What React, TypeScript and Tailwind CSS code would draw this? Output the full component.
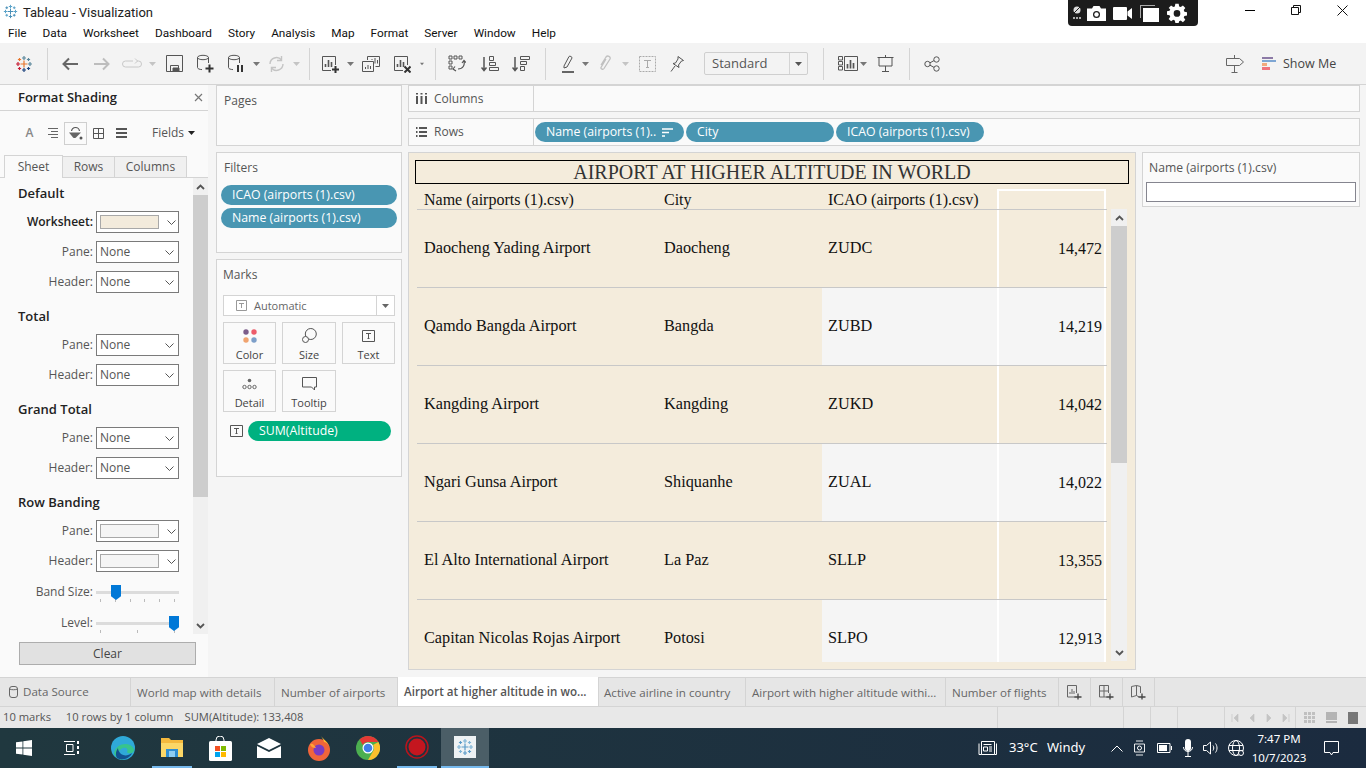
import React from 'react';

const rows = [
  { name: 'Daocheng Yading Airport', city: 'Daocheng', icao: 'ZUDC', alt: '14,472' },
  { name: 'Qamdo Bangda Airport', city: 'Bangda', icao: 'ZUBD', alt: '14,219' },
  { name: 'Kangding Airport', city: 'Kangding', icao: 'ZUKD', alt: '14,042' },
  { name: 'Ngari Gunsa Airport', city: 'Shiquanhe', icao: 'ZUAL', alt: '14,022' },
  { name: 'El Alto International Airport', city: 'La Paz', icao: 'SLLP', alt: '13,355' },
  { name: 'Capitan Nicolas Rojas Airport', city: 'Potosi', icao: 'SLPO', alt: '12,913' },
];

function Caret({ color = '#777' }: { color?: string }) {
  return (
    <svg width="7" height="4" viewBox="0 0 7 4">
      <path d="M0 0h7L3.5 4z" fill={color} />
    </svg>
  );
}

function Chevron() {
  return (
    <svg width="9" height="5" viewBox="0 0 9 5" fill="none" stroke="#555" strokeWidth="1">
      <path d="M.5.5l4 4 4-4" />
    </svg>
  );
}

function TableauMark({ c1, c2, c3, c4, size = 18 }: { c1: string; c2: string; c3: string; c4: string; size?: number }) {
  const plus = (x: number, y: number, r: number, c: string, k: string) => (
    <path key={k} d={`M${x - r} ${y}h${r * 2}M${x} ${y - r}v${r * 2}`} stroke={c} strokeWidth="1.2" fill="none" />
  );
  return (
    <svg width={size} height={size} viewBox="0 0 18 18">
      {plus(9, 9, 3.5, c1, 'a')}
      {plus(9, 3, 2, c2, 'b')}
      {plus(3, 9, 2, c3, 'c')}
      {plus(15, 9, 2, c2, 'd')}
      {plus(9, 15, 2, c4, 'e')}
      {plus(4.5, 4.5, 1.6, c1, 'f')}
      {plus(13.5, 4.5, 1.6, c2, 'g')}
      {plus(4.5, 13.5, 1.6, c3, 'h')}
      {plus(13.5, 13.5, 1.6, c4, 'i')}
    </svg>
  );
}

function SheetIcon({ plus, cross, color = '#555' }: { plus?: boolean; cross?: boolean; color?: string }) {
  return (
    <svg width="18" height="18" viewBox="0 0 18 18" fill="none" stroke={color}>
      <path d="M10 15.5H1.5v-14h13V10" />
      <path d="M4.5 12V9M7.5 12V5M10.5 12V7" strokeWidth="1.6" />
      {plus && <path d="M11 14.5h7M14.5 11v7" strokeWidth="2" stroke="#333" />}
      {cross && <path d="M11.5 11.5l6 6M17.5 11.5l-6 6" strokeWidth="2" stroke="#333" />}
    </svg>
  );
}

function DbIcon({ badge }: { badge: 'plus' | 'pause' }) {
  return (
    <svg width="18" height="19" viewBox="0 0 18 19" fill="none" stroke="#555">
      <ellipse cx="7" cy="3.5" rx="5.5" ry="2.2" />
      <path d="M1.5 3.5v10c0 1.2 2 2 4.5 2.1M12.5 3.5V9" />
      {badge === 'plus' ? (
        <path d="M9.5 14.5h8M13.5 10.5v8" strokeWidth="2" stroke="#333" />
      ) : (
        <path d="M11 11v7M15 11v7" strokeWidth="2" stroke="#333" />
      )}
    </svg>
  );
}

function Sep() {
  return <div className="w-px h-[32px] bg-[#d4d4d4]" />;
}

function Slot({ className, children }: { className: string; children?: React.ReactNode }) {
  return <div className={`flex items-center justify-center shrink-0 ${className}`}>{children}</div>;
}

function TitleBar() {
  return (
    <div className="flex h-[25px] bg-white items-start">
      <div className="w-[23px] pl-[3px] pt-[4px]">
        <TableauMark c1="#4a90b8" c2="#5ba3c9" c3="#5ba3c9" c4="#4a90b8" size={15} />
      </div>
      <span className="w-[120px] whitespace-nowrap text-[13px] leading-[25px] text-[#222] font-['Roboto',sans-serif]">Tableau - Visualization</span>
      <div className="ml-[925px] w-[130px] h-[26px] bg-[#1c1c1c] rounded-b-[4px] flex items-center relative z-10">
        <Slot className="w-[17px]">
          <svg width="10" height="14" viewBox="0 0 10 14">
            <circle cx="5" cy="4" r="3.5" fill="#ddd" />
            <path d="M1 8l7-7" stroke="#1c1c1c" strokeWidth="1" />
            <path d="M1 12h2M4 12h2M7 12h2" stroke="#ddd" strokeWidth="1.5" />
          </svg>
        </Slot>
        <Slot className="w-[22px]">
          <svg width="19" height="15" viewBox="0 0 19 15">
            <path d="M0 2.5h5L6.5 0h6L14 2.5h5V15H0z" fill="#fff" />
            <circle cx="9.5" cy="8.5" r="3.5" fill="#1c1c1c" />
            <circle cx="9.5" cy="8.5" r="2.2" fill="#fff" />
          </svg>
        </Slot>
        <Slot className="w-[20px] ml-[5px]">
          <svg width="19" height="13" viewBox="0 0 19 13">
            <rect width="14" height="13" rx="1" fill="#fff" />
            <path d="M14.5 4.5L19 1v11l-4.500-3.500z" fill="#fff" />
          </svg>
        </Slot>
        <Slot className="w-[20px] ml-[7px]">
          <svg width="19" height="17" viewBox="0 0 19 17">
            <path d="M0 0h15v1H1v12H0z" fill="#aaa" />
            <rect x="3" y="3" width="16" height="14" fill="#fff" />
          </svg>
        </Slot>
        <Slot className="w-[20px] ml-[8px]">
          <svg width="20" height="20" viewBox="0 0 24 24">
            <path
              fill="#fff"
              fillRule="evenodd"
              d="M10 1h4l.6 3.100 1.900.8L19.100 3 22 5.900l-1.900 2.600.8 1.900L24 11v4l-3.100.6-.8 1.900 1.900 2.600-2.900 2.900-2.600-1.900-1.900.8L14 24h-4l-.6-3.100-1.900-.8L4.900 22 2 19.100l1.900-2.600-.8-1.900L0 14v-4l3.100-.6.8-1.900L2 5.900 4.900 3l2.600 1.900 1.900-.8zM12 8.500a4 4 0 100 8 4 4 0 000-8z"
            />
          </svg>
        </Slot>
      </div>
      <div className="flex flex-1 items-start">
        <Slot className="w-[46px] h-[20px] ml-[29px]">
          <div className="w-[10px] h-px bg-black" />
        </Slot>
        <Slot className="w-[46px] h-[20px]">
          <svg width="10" height="10" viewBox="0 0 10 10" fill="none" stroke="#111">
            <path d="M2.500 2.500V.5h7v7h-2M.5 2.500h7v7h-7z" />
          </svg>
        </Slot>
        <Slot className="w-[46px] h-[20px]">
          <svg width="11" height="11" viewBox="0 0 11 11" fill="none" stroke="#111">
            <path d="M.5.5l10 10M10.500.5l-10 10" />
          </svg>
        </Slot>
      </div>
    </div>
  );
}

function MenuBar() {
  const items = ['File', 'Data', 'Worksheet', 'Dashboard', 'Story', 'Analysis', 'Map', 'Format', 'Server', 'Window', 'Help'];
  return (
    <div className="flex h-[18px] bg-white items-center pl-[8px] gap-[16px] text-[11.8px] text-[#111] font-['Roboto',sans-serif]">
      {items.map((m) => (
        <span key={m}>{m}</span>
      ))}
    </div>
  );
}

function Toolbar() {
  return (
    <div className="flex h-[42px] items-center bg-[#f3f3f3] border-b border-[#d4d4d4] pl-[8px]">
      <Slot className="w-[32px]">
        <TableauMark c1="#e8762d" c2="#5b879b" c3="#c72037" c4="#1f447e" />
      </Slot>
      <Slot className="w-[14px]"><Sep /></Slot>
      <Slot className="w-[32px]">
        <svg width="18" height="14" viewBox="0 0 18 14" fill="none" stroke="#666" strokeWidth="2">
          <path d="M17 7H3M8 1.500L2.500 7 8 12.500" />
        </svg>
      </Slot>
      <Slot className="w-[32px]">
        <svg width="18" height="14" viewBox="0 0 18 14" fill="none" stroke="#bdbdbd" strokeWidth="2">
          <path d="M1 7h14M10 1.500L15.500 7 10 12.500" />
        </svg>
      </Slot>
      <Slot className="w-[28px]">
        <svg width="20" height="12" viewBox="0 0 20 12" fill="none" stroke="#c8c8c8">
          <path d="M11 3H3.500a3 3 0 000 6h13a3 3 0 000-6H15M13 .5L15.500 3 13 5.500" />
        </svg>
      </Slot>
      <Slot className="w-[12px]"><Caret color="#c4c4c4" /></Slot>
      <Slot className="w-[32px]">
        <svg width="17" height="17" viewBox="0 0 17 17" fill="none" stroke="#555">
          <path d="M.5.5h16v16H.5z" />
          <path d="M4.500 16.500v-6h8v6" />
          <path d="M7 13h6v3.500H7z" fill="#555" />
        </svg>
      </Slot>
      <Slot className="w-[30px]"><DbIcon badge="plus" /></Slot>
      <Slot className="w-[32px]"><DbIcon badge="pause" /></Slot>
      <Slot className="w-[8px]"><Caret /></Slot>
      <Slot className="w-[32px]">
        <svg width="17" height="16" viewBox="0 0 17 16" fill="none" stroke="#c4c4c4" strokeWidth="1.400">
          <path d="M2 8a6.500 6.500 0 0111.500-4M15 8a6.500 6.500 0 01-11.500 4" />
          <path d="M13.500 0v4.500H9M3.500 16v-4.500H8" />
        </svg>
      </Slot>
      <Slot className="w-[8px]"><Caret color="#c4c4c4" /></Slot>
      <Slot className="w-[18px]"><Sep /></Slot>
      <Slot className="w-[24px]"><SheetIcon plus /></Slot>
      <Slot className="w-[16px]"><Caret /></Slot>
      <Slot className="w-[26px]">
        <svg width="18" height="16" viewBox="0 0 18 16" fill="none" stroke="#555">
          <path d="M5.500 4V.5h12v10h-4" />
          <path d="M.5 5.500h11v10H.5z" fill="#f3f3f3" />
          <path d="M3.500 13v-2M6 13v-4M8.500 13v-3M10 4V3M13 7.500V2M15.500 7.500V4" />
        </svg>
      </Slot>
      <Slot className="w-[36px]"><SheetIcon cross /></Slot>
      <Slot className="w-[4px]"><Caret /></Slot>
      <Slot className="w-[22px]"><Sep /></Slot>
      <Slot className="w-[22px]">
        <svg width="18" height="17" viewBox="0 0 18 17" fill="none" stroke="#555">
          <path d="M1 1h3v3H1zM6 1h3v3H6zM11 1h3v3h-3zM1 6h3v3H1zM1 11h3v3H1z" />
          <path d="M16 6c1 4-1 8-6 8M7 11.500l-2 2.500 3 2M14 8l2-2.500 2 2" strokeWidth="1.200" />
        </svg>
      </Slot>
      <Slot className="w-[44px]">
        <svg width="18" height="16" viewBox="0 0 18 16" fill="none" stroke="#555">
          <path d="M3 1v13M.5 11.500L3 14.500l2.500-3" strokeWidth="1.500" />
          <path d="M8.500.5h4v4h-4zM8.500 6.500h6v3h-6zM8.500 11.500h9v3h-9z" />
        </svg>
      </Slot>
      <Slot className="w-[18px]">
        <svg width="18" height="16" viewBox="0 0 18 16" fill="none" stroke="#555">
          <path d="M3 1v13M.5 11.500L3 14.500l2.500-3" strokeWidth="1.500" />
          <path d="M8.500.5h9v3h-9zM8.500 5.500h6v3h-6zM8.500 10.500h4v4h-4z" />
        </svg>
      </Slot>
      <Slot className="w-[30px]"><Sep /></Slot>
      <Slot className="w-[16px]">
        <svg width="14" height="18" viewBox="0 0 14 18" fill="none" stroke="#555">
          <path d="M3 11L8 1.500c.7-1 3.500.5 3 1.500L6 12l-3 1z" />
          <path d="M1 17h12" strokeWidth="1.800" />
        </svg>
      </Slot>
      <Slot className="w-[18px]"><Caret /></Slot>
      <Slot className="w-[22px]">
        <svg width="13" height="17" viewBox="0 0 13 17" fill="none" stroke="#c0c0c0" strokeWidth="1.300">
          <path d="M2 10l5-8c1.500-2 5-.5 4 2l-6 9.500c-1 1.500-3.500.5-3-1l5-8.500" />
        </svg>
      </Slot>
      <Slot className="w-[18px]"><Caret color="#c4c4c4" /></Slot>
      <Slot className="w-[26px]">
        <svg width="17" height="16" viewBox="0 0 17 16" fill="none" stroke="#aaa">
          <path d="M.5.5h16v15H.5z" strokeDasharray="2 1" />
          <path d="M5 4.500h7M8.500 4.500v7M7 11.500h3" />
        </svg>
      </Slot>
      <Slot className="w-[34px]">
        <svg width="14" height="16" viewBox="0 0 14 16" fill="none" stroke="#555">
          <path d="M8 .5l5.500 4-2 .5-3 4 .5 2.500L3 7.500l2.500-.5 2.500-4zM5 10l-4 5.500" />
        </svg>
      </Slot>
      <div className="flex items-center w-[104px] h-[23px] ml-[10px] border border-[#cfcfcf] rounded-[2px] text-[#555] text-[13px]">
        <span className="flex-1 pl-[7px]">Standard</span>
        <Slot className="w-[18px] h-[21px] border-l border-[#d4d4d4]"><Caret color="#555" /></Slot>
      </div>
      <Slot className="w-[30px]"><Sep /></Slot>
      <Slot className="w-[20px]">
        <svg width="20" height="15" viewBox="0 0 20 15" fill="none" stroke="#555">
          <path d="M.5.5h4v3.500h-4zM.5 5.500h4v3.500h-4zM.5 10.500h4V14h-4zM6.500.5h13v14h-13z" />
          <path d="M9.500 12.500V8M12.500 12.500V4M15.500 12.500V7" strokeWidth="1.700" />
        </svg>
      </Slot>
      <Slot className="w-[10px]"><Caret /></Slot>
      <Slot className="w-[34px]">
        <svg width="17" height="17" viewBox="0 0 17 17" fill="none" stroke="#555">
          <path d="M.5 2.500h16M2 2.500v8.500h13V2.500M8.500 0v2.500M8.500 11v5M5 16.500h7" />
        </svg>
      </Slot>
      <Slot className="w-[14px]"><Sep /></Slot>
      <Slot className="w-[32px]">
        <svg width="16" height="16" viewBox="0 0 16 16" fill="none" stroke="#555">
          <circle cx="3.500" cy="8" r="2.700" />
          <circle cx="12.500" cy="3.500" r="2.700" />
          <circle cx="12.500" cy="12.500" r="2.700" />
          <path d="M6 6.800l4-2.200M6 9.200l4 2.200" />
        </svg>
      </Slot>
      <Slot className="w-[20px] ml-[277px]">
        <svg width="18" height="18" viewBox="0 0 18 18" fill="none" stroke="#666">
          <path d="M.5 3.500h13l4 3.500-4 3.500H.5zM8.500 0v3.500M8.500 10.500V17M5.500 17.500h6" />
        </svg>
      </Slot>
      <div className="ml-[17px] flex items-center gap-[7px]">
        <div className="flex flex-col gap-px">
          <div className="w-[11px] h-[2px] bg-[#8c7aa6]" />
          <div className="w-[14px] h-[2px] bg-[#7ea6d3]" />
          <div className="w-[5px] h-[3px] bg-[#f2a97c]" />
          <div className="w-[8px] h-[3px] bg-[#f0737d]" />
        </div>
        <span className="pt-px text-[12.5px] text-[#444]">Show Me</span>
      </div>
    </div>
  );
}

function SelectRow({ label, bold, swatch }: { label: string; bold?: boolean; swatch?: string }) {
  return (
    <div className="flex items-center h-[22px]">
      <span className={bold ? 'w-[75px] text-right text-[12px] font-semibold text-[#222]' : 'w-[75px] text-right text-[12px] text-[#555]'}>{label}</span>
      <div className="ml-[3px] w-[83px] h-[22px] flex items-center border border-[#7a7a7a] bg-white">
        {swatch === 'beige' && <div className="ml-[3px] w-[59px] h-[14px] bg-[#f3ebdc] border border-[#a8a8a8]" />}
        {swatch === 'gray' && <div className="ml-[3px] w-[59px] h-[14px] bg-[#f5f5f5] border border-[#a8a8a8]" />}
        {!swatch && <span className="pl-[3px] w-[66px] text-[12px] text-[#555]">None</span>}
        <div className={swatch ? 'ml-[8px]' : 'ml-[2px]'}>
          <Chevron />
        </div>
      </div>
    </div>
  );
}

function Section({ title, first, children }: { title: string; first?: boolean; children: React.ReactNode }) {
  return (
    <div className={first ? 'flex flex-col' : 'flex flex-col mt-[14px]'}>
      <div className="h-[18px] mb-[9px] text-[13px] leading-[18px] font-semibold text-[#222]">{title}</div>
      <div className="flex flex-col gap-[8px]">{children}</div>
    </div>
  );
}

function SliderRow({ label, thumb, ticks }: { label: string; thumb: 'mid' | 'end'; ticks: number }) {
  return (
    <div className="flex items-center h-[22px]">
      <span className="w-[75px] text-right text-[12px] text-[#555]">{label}</span>
      <div className="ml-[3px] w-[83px] h-[22px] flex flex-col pt-[10px]">
        <div className="h-[3px] bg-[#dcdcdc] flex items-center">
          <div
            className={
              thumb === 'mid'
                ? 'ml-[15px] w-[10px] h-[15px] bg-[#0078d7] [clip-path:polygon(0_0,100%_0,100%_75%,50%_100%,0_75%)]'
                : 'ml-[73px] w-[10px] h-[15px] bg-[#0078d7] [clip-path:polygon(0_0,100%_0,100%_75%,50%_100%,0_75%)]'
            }
          />
        </div>
        <div className="flex justify-between px-[4px] mt-[5px]">
          {Array.from({ length: ticks }).map((_, i) => (
            <div key={i} className="w-px h-[3px] bg-[#bbb]" />
          ))}
        </div>
      </div>
    </div>
  );
}

function FormatPane() {
  return (
    <div className="w-[208px] h-full shrink-0 bg-[#fafafa] flex flex-col">
      <div className="h-[26px] flex items-center justify-between pl-[18px] pr-[5px] border-b border-[#d4d4d4]">
        <span className="text-[13px] font-semibold text-[#222]">Format Shading</span>
        <svg width="9" height="9" viewBox="0 0 9 9" fill="none" stroke="#777" strokeWidth="1.200">
          <path d="M1 1l7 7M8 1L1 8" />
        </svg>
      </div>
      <div className="h-[44px] flex items-center pl-[18px] text-[#666]">
        <Slot className="w-[23px] text-[12px] font-semibold text-[#888]">A</Slot>
        <Slot className="w-[23px]">
          <svg width="12" height="10" viewBox="0 0 12 10" stroke="#666">
            <path d="M1 .5h10M4 3.500h7M1 6.500h10M4 9.500h7" />
          </svg>
        </Slot>
        <Slot className="w-[23px] h-[23px] border border-[#cfcfcf]">
          <svg width="15" height="14" viewBox="0 0 15 14">
            <path d="M3.500 5.500a4 4 0 018 0" fill="none" stroke="#555" strokeWidth="1.200" />
            <path d="M1 6.500h12L8 11.500c-1 .8-2 .8-3 0z" fill="#666" />
            <path d="M1.500 5.500h11" stroke="#fff" />
            <circle cx="13" cy="12" r="1.500" fill="#555" />
          </svg>
        </Slot>
        <Slot className="w-[23px]">
          <svg width="11" height="11" viewBox="0 0 11 11" fill="none" stroke="#555">
            <path d="M.5.500h10v10H.5zM5.500.5v10M.5 5.500h10" />
          </svg>
        </Slot>
        <Slot className="w-[23px]">
          <svg width="11" height="10" viewBox="0 0 11 10" fill="none" stroke="#555" strokeWidth="2">
            <path d="M0 1h11M0 5h11M0 9h11" />
          </svg>
        </Slot>
        <span className="ml-[19px] text-[12px] text-[#555]">Fields</span>
        <div className="ml-[4px]"><Caret color="#222" /></div>
      </div>
      <div className="h-[23px] flex items-end pl-[4px] border-b border-[#d4d4d4] text-[12px] text-[#555]">
        <div className="w-[59px] h-[23px] -mb-px flex items-center justify-center bg-[#fafafa] border border-b-0 border-[#d4d4d4]">Sheet</div>
        <div className="w-[52px] h-[21px] flex items-center justify-center bg-[#f0f0f0] border-t border-r border-[#d4d4d4]">Rows</div>
        <div className="w-[72px] h-[21px] flex items-center justify-center bg-[#f0f0f0] border-t border-r border-[#d4d4d4]">Columns</div>
      </div>
      <div className="flex h-[456px]">
        <div className="w-[193px] pl-[18px] pt-[6px] overflow-hidden">
          <Section title="Default" first>
            <SelectRow label="Worksheet:" bold swatch="beige" />
            <SelectRow label="Pane:" />
            <SelectRow label="Header:" />
          </Section>
          <Section title="Total">
            <SelectRow label="Pane:" />
            <SelectRow label="Header:" />
          </Section>
          <Section title="Grand Total">
            <SelectRow label="Pane:" />
            <SelectRow label="Header:" />
          </Section>
          <Section title="Row Banding">
            <SelectRow label="Pane:" swatch="gray" />
            <SelectRow label="Header:" swatch="gray" />
            <div className="mt-[1px]">
              <SliderRow label="Band Size:" thumb="mid" ticks={6} />
            </div>
            <div className="mt-[1px]">
              <SliderRow label="Level:" thumb="end" ticks={3} />
            </div>
          </Section>
        </div>
        <div className="w-[15px] bg-[#f0f0f0] flex flex-col">
          <Slot className="h-[17px]">
            <svg width="9" height="6" viewBox="0 0 9 6" fill="none" stroke="#555" strokeWidth="1.800"><path d="M1 5l3.500-3.500L8 5" /></svg>
          </Slot>
          <div className="h-[302px] bg-[#cdcdcd]" />
          <div className="flex-1" />
          <Slot className="h-[17px]">
            <svg width="9" height="6" viewBox="0 0 9 6" fill="none" stroke="#555" strokeWidth="1.800"><path d="M1 1l3.500 3.500L8 1" /></svg>
          </Slot>
        </div>
      </div>
      <div className="mt-[8px] ml-[19px] w-[177px] h-[23px] flex items-center justify-center bg-[#e1e1e1] border border-[#adadad] text-[12px] text-[#444]">Clear</div>
    </div>
  );
}

function Card({ className, children }: { className: string; children?: React.ReactNode }) {
  return <div className={`bg-[#fafafa] border border-[#d4d4d4] ${className}`}>{children}</div>;
}

function MarkBtn({ label, children, wide }: { label: string; children: React.ReactNode; wide?: boolean }) {
  return (
    <div className={wide ? 'w-[54px] h-[42px] flex flex-col items-center border border-[#d4d4d4] bg-[#fafafa]' : 'w-[53px] h-[42px] flex flex-col items-center border border-[#d4d4d4] bg-[#fafafa]'}>
      <div className="h-[25px] flex items-center justify-center">{children}</div>
      <span className="text-[11px] leading-[14px] text-[#444]">{label}</span>
    </div>
  );
}

function TIcon({ size = 13 }: { size?: number }) {
  return (
    <svg width={size} height={size - 1} viewBox="0 0 13 12" fill="none" stroke="#555">
      <path d="M.5.5h12v11H.5z" />
      <path d="M4 3.500h5M6.500 3.500v5M5.500 8.500h2" />
    </svg>
  );
}

function MidColumn() {
  return (
    <div className="w-[186px] ml-[8px] shrink-0 flex flex-col gap-[6px]">
      <Card className="h-[61px] pl-[7px] pt-[6px] text-[12px] text-[#555]">Pages</Card>
      <Card className="h-[101px] pl-[4px] pr-[4px]">
        <div className="pl-[3px] pt-[6px] h-[32px] text-[12px] text-[#555]">Filters</div>
        <div className="h-[20px] rounded-full bg-[#4996b2] text-white text-[12.3px] leading-[20px] pl-[11px]">ICAO (airports (1).csv)</div>
        <div className="mt-[3px] h-[20px] rounded-full bg-[#4996b2] text-white text-[12.3px] leading-[20px] pl-[11px]">Name (airports (1).csv)</div>
      </Card>
      <Card className="h-[218px] px-[6px]">
        <div className="pt-[6px] h-[35px] text-[12px] text-[#555]">Marks</div>
        <div className="h-[21px] flex items-center border border-[#d4d4d4] bg-white">
          <div className="ml-[12px]">
            <svg width="11" height="11" viewBox="0 0 11 11" fill="none" stroke="#999">
              <path d="M.5.5h10v10H.5z" />
              <path d="M3 3.500h5M5.500 3.500v4.500" />
            </svg>
          </div>
          <span className="ml-[7px] pt-px text-[11px] text-[#666] flex-1">Automatic</span>
          <Slot className="w-[18px] h-[19px] border-l border-[#d4d4d4]"><Caret color="#666" /></Slot>
        </div>
        <div className="mt-[6px] flex gap-[6px]">
          <MarkBtn label="Color">
            <svg width="14" height="14" viewBox="0 0 14 14">
              <circle cx="3" cy="3" r="2.700" fill="#7b5d8a" />
              <circle cx="11" cy="3" r="2.700" fill="#ed5c6a" />
              <circle cx="3" cy="11" r="2.700" fill="#f0a36f" />
              <circle cx="11" cy="11" r="2.700" fill="#7d9fc9" />
            </svg>
          </MarkBtn>
          <MarkBtn label="Size" wide>
            <svg width="15" height="15" viewBox="0 0 15 15" fill="none" stroke="#555">
              <circle cx="8.800" cy="6" r="5.500" />
              <circle cx="3.500" cy="11.500" r="3" fill="#fafafa" />
            </svg>
          </MarkBtn>
          <MarkBtn label="Text"><TIcon /></MarkBtn>
        </div>
        <div className="mt-[6px] flex gap-[6px]">
          <MarkBtn label="Detail">
            <svg width="15" height="12" viewBox="0 0 15 12">
              <circle cx="7.500" cy="2.500" r="1.800" fill="#666" />
              <g fill="none" stroke="#666">
                <circle cx="2.500" cy="9" r="1.700" />
                <circle cx="7.500" cy="9" r="1.700" />
                <circle cx="12.500" cy="9" r="1.700" />
              </g>
            </svg>
          </MarkBtn>
          <MarkBtn label="Tooltip" wide>
            <svg width="15" height="14" viewBox="0 0 15 14" fill="none" stroke="#555">
              <path d="M.5.5h14v9.500h-2v3l-3-3h-9z" />
            </svg>
          </MarkBtn>
        </div>
        <div className="mt-[9px] flex items-center pl-[7px]">
          <TIcon />
          <div className="ml-[5px] w-[143px] h-[20px] rounded-full bg-[#00b180] text-white text-[12.3px] leading-[20px] pl-[11px]">SUM(Altitude)</div>
        </div>
      </Card>
    </div>
  );
}

function Shelf({ label, icon, children, h }: { label: string; icon: React.ReactNode; children?: React.ReactNode; h: string }) {
  return (
    <Card className={`flex ${h}`}>
      <div className="w-[125px] flex items-center border-r border-[#d4d4d4] text-[12px] text-[#555]">
        <Slot className="w-[25px]">{icon}</Slot>
        <span>{label}</span>
      </div>
      <div className="flex-1 flex items-center pl-[1px] gap-[2px]">{children}</div>
    </Card>
  );
}

function Pill({ label, sort }: { label: string; sort?: boolean }) {
  return (
    <div className={sort ? 'w-[149px] h-[20px] rounded-full bg-[#4996b2] text-white text-[12.3px] flex items-center pl-[11px] whitespace-nowrap' : 'w-[148px] h-[20px] rounded-full bg-[#4996b2] text-white text-[12.3px] flex items-center pl-[11px] whitespace-nowrap'}>
      <span className="flex-1">{label}</span>
      {sort && (
        <svg className="mr-[11px]" width="11" height="9" viewBox="0 0 11 9" stroke="#fff" strokeWidth="1.600">
          <path d="M0 1h11M0 4.500h7M0 8h3" />
        </svg>
      )}
    </div>
  );
}

function Viz() {
  return (
    <div className="h-[518px] bg-[#f4ecdc] border border-[#d4d4d4] font-['Liberation_Serif',serif] text-[#111]">
      <div className="mt-[7px] ml-[6px] w-[714px] h-[24px] border border-black text-center text-[20px] leading-[22px] text-[#333]">
        AIRPORT AT HIGHER ALTITUDE IN WORLD
      </div>
      <div className="ml-[8px] mt-[5px] flex">
        <div className="w-[690px] flex flex-col">
          <div className="flex h-[21px] border-b border-[#c8c8c8] text-[16px] leading-[22px]">
            <div className="w-[241px] pl-[7px]">Name (airports (1).csv)</div>
            <div className="w-[164px] pl-[6px]">City</div>
            <div className="w-[176px] pl-[6px] whitespace-nowrap">ICAO (airports (1).csv)</div>
            <div className="w-[109px] border-t-2 border-l-2 border-r-2 border-white -ml-[1px]" />
          </div>
          <div className="h-[452px] overflow-hidden">
            {rows.map((r, i) => (
              <div key={r.icao} className="flex h-[78px] shrink-0 border-b border-[#c8c8c8] text-[16.25px] items-stretch">
                <div className="w-[241px] pl-[7px] flex items-center">{r.name}</div>
                <div className="w-[164px] pl-[6px] flex items-center">{r.city}</div>
                <div className={i % 2 ? 'w-[176px] pl-[6px] flex items-center bg-[#f5f5f5]' : 'w-[176px] pl-[6px] flex items-center'}>{r.icao}</div>
                <div className={i % 2 ? 'w-[109px] pr-[2px] text-[16px] flex items-center justify-end border-l-2 border-r-2 border-white -ml-[1px] bg-[#f5f5f5]' : 'w-[109px] pr-[2px] text-[16px] flex items-center justify-end border-l-2 border-r-2 border-white -ml-[1px]'}>{r.alt}</div>
              </div>
            ))}
          </div>
        </div>
        <div className="ml-[4px] mt-[20px] w-[16px] h-[452px] bg-[#f0f0f0] flex flex-col">
          <Slot className="h-[17px]">
            <svg width="9" height="6" viewBox="0 0 9 6" fill="none" stroke="#555" strokeWidth="1.800"><path d="M1 5l3.500-3.500L8 5" /></svg>
          </Slot>
          <div className="h-[237px] bg-[#cdcdcd]" />
          <div className="flex-1" />
          <Slot className="h-[17px]">
            <svg width="9" height="6" viewBox="0 0 9 6" fill="none" stroke="#555" strokeWidth="1.800"><path d="M1 1l3.500 3.500L8 1" /></svg>
          </Slot>
        </div>
      </div>
    </div>
  );
}

function RightArea() {
  return (
    <div className="w-[952px] ml-[6px] shrink-0 flex flex-col gap-[6px]">
      <Shelf
        label="Columns"
        h="h-[27px]"
        icon={
          <svg width="11" height="11" viewBox="0 0 11 11" stroke="#555" strokeWidth="2">
            <path d="M1 3v8M5.500 3v8M10 3v8M1 0v1.500M5.500 0v1.500M10 0v1.500" />
          </svg>
        }
      />
      <Shelf
        label="Rows"
        h="h-[28px]"
        icon={
          <svg width="11" height="10" viewBox="0 0 11 10" stroke="#555" strokeWidth="2">
            <path d="M3 1h8M3 5h8M3 9h8M0 1h1.500M0 5h1.500M0 9h1.500" />
          </svg>
        }
      >
        <Pill label="Name (airports (1).." sort />
        <Pill label="City" />
        <Pill label="ICAO (airports (1).csv)" />
      </Shelf>
      <div className="flex gap-[6px]">
        <div className="w-[728px]"><Viz /></div>
        <Card className="w-[218px] h-[55px] px-[3px]">
          <div className="pl-[3px] h-[29px] pt-[6px] text-[12.2px] text-[#555]">Name (airports (1).csv)</div>
          <div className="h-[20px] bg-white border border-[#85858f]" />
        </Card>
      </div>
    </div>
  );
}

function Tabs() {
  return (
    <div className="h-[30px] flex bg-[#e6e6e6] border-t border-[#d4d4d4] border-b text-[11.6px] text-[#666]">
      <div className="w-[131px] flex items-center border-r border-[#d4d4d4] pl-[9px] gap-[4px]">
        <svg width="10" height="12" viewBox="0 0 10 12" fill="none" stroke="#666">
          <rect x=".5" y=".5" width="8" height="11" rx="2.500" />
          <path d="M.5 3c2 1 6 1 8 0" />
        </svg>
        <span>Data Source</span>
      </div>
      <div className="w-[144px] pt-px flex items-center border-r border-[#d4d4d4] pl-[6px]">World map with details</div>
      <div className="w-[123px] pt-px flex items-center border-r border-[#d4d4d4] pl-[6px]">Number of airports</div>
      <div className="w-[200px] flex items-center bg-white font-semibold text-[#555] pl-[6px] -mt-px">Airport at higher altitude in wo...</div>
      <div className="w-[148px] pt-px flex items-center border-r border-l border-[#d4d4d4] pl-[5px]">Active airline in country</div>
      <div className="w-[200px] pt-px flex items-center border-r border-[#d4d4d4] pl-[6px]">Airport with higher altitude withi...</div>
      <div className="w-[113px] pt-px flex items-center border-r border-[#d4d4d4] pl-[6px]">Number of flights</div>
      <Slot className="w-[32px] border-r border-[#d4d4d4]">
        <svg width="15" height="15" viewBox="0 0 15 15" fill="none" stroke="#666">
          <path d="M8 12H.5V.5h9V8M3 9V7M5 9V4M7 9V6" />
          <path d="M7.500 12h7M11 8.500v6" stroke="#444" strokeWidth="1.300" />
        </svg>
      </Slot>
      <Slot className="w-[32px] border-r border-[#d4d4d4]">
        <svg width="15" height="15" viewBox="0 0 15 15" fill="none" stroke="#666">
          <path d="M8 12H.5V.5h9V8M.5 6h9M5 .5V12" />
          <path d="M7.500 12h7M11 8.500v6" stroke="#444" strokeWidth="1.300" />
        </svg>
      </Slot>
      <Slot className="w-[32px] border-r border-[#d4d4d4]">
        <svg width="15" height="15" viewBox="0 0 15 15" fill="none" stroke="#666">
          <path d="M8 12l-2.500-1.500-5 1.500V1.500L5.500.5l4 1V8M5.500.5v10" />
          <path d="M7.500 12h7M11 8.500v6" stroke="#444" strokeWidth="1.300" />
        </svg>
      </Slot>
    </div>
  );
}

function StatusBar() {
  return (
    <div className="h-[21px] flex items-center bg-[#e8e8e8] text-[11.2px] text-[#555]">
      <span className="w-[63px] pl-[3px]">10 marks</span>
      <span className="w-[122px] pl-[3px]">10 rows by 1 column</span>
      <span className="w-[814px]">SUM(Altitude): 133,408</span>
      <div className="w-[127px] h-full border-l border-[#d4d4d4]" />
      <div className="w-[27px] h-full border-l border-[#d4d4d4]" />
      <div className="w-[27px] h-full border-l border-[#d4d4d4]" />
      <div className="w-[47px] h-full border-l border-[#d4d4d4]" />
      <div className="w-[71px] h-full border-l border-[#d4d4d4] flex items-center justify-center gap-[9px]">
        {['M1 0v8M7 0v8L3 4z', 'M6 0v8L2 4z', 'M2 0v8l4-4z', 'M7 0v8M1 0v8l4-4z'].map((d) => (
          <svg key={d} width="8" height="8" viewBox="0 0 8 8" fill="#c4c4c4" stroke="#c4c4c4" strokeWidth=".7">
            <path d={d} />
          </svg>
        ))}
      </div>
      <div className="flex-1 h-full border-l border-[#d4d4d4] flex items-center">
        <Slot className="w-[25px] ml-[1px]">
          <div className="grid grid-cols-3 gap-px">
            {Array.from({ length: 9 }).map((_, i) => (
              <div key={i} className="w-[3px] h-[3px] bg-[#c0c0c0]" />
            ))}
          </div>
        </Slot>
        <Slot className="w-[18px]">
          <div className="flex flex-col gap-px">
            <div className="w-[11px] h-[8px] bg-[#b4b4b4]" />
            <div className="w-[11px] h-[2px] bg-[#b4b4b4]" />
          </div>
        </Slot>
        <Slot className="w-[26px]"><div className="w-[10px] h-[12px] bg-[#777]" /></Slot>
      </div>
    </div>
  );
}

function Taskbar() {
  return (
    <div className="h-[40px] flex items-center bg-gradient-to-r from-[#20383f] to-[#1b2b3f] text-white font-['Noto_Sans',sans-serif]">
      <Slot className="w-[48px] h-full">
        <svg width="16" height="16" viewBox="0 0 16 16" fill="#fff">
          <path d="M0 2.300l6.500-.9v6.200H0zM7.300 1.300L16 0v7.600H7.300zM0 8.400h6.500v6.200L0 13.700zM7.300 8.400H16V16l-8.700-1.200z" />
        </svg>
      </Slot>
      <Slot className="w-[47px] h-full">
        <svg width="16" height="16" viewBox="0 0 16 16" fill="none" stroke="#fff">
          <path d="M0 1.500h11M2.500 4.500h6.500v7H2.500zM0 14.500h11" />
          <path d="M14 1v3M14 6v3M14 11v3" strokeWidth="2" />
        </svg>
      </Slot>
      <div className="w-[4px]" />
      <Slot className="w-[48px] h-full">
        <svg width="24" height="24" viewBox="0 0 24 24">
          <circle cx="12" cy="12" r="12" fill="#2fa9d8" />
          <path d="M3 17c2-10 16-12 20-4 1 4-5 6-7 3 2-3-2-6-6-3-4 3-2 9 3 11-5 0-9-3-10-7z" fill="#37c48c" />
          <path d="M6 22c4 3 13 1 15-5-4 3-8 3-11 1-2-2-3-4-3-6-2 3-3 7-1 10z" fill="#12518f" />
        </svg>
      </Slot>
      <Slot className="w-[49px] h-full">
        <div className="w-[40px] h-full flex items-center justify-center border-b-2 border-[#76b9ed]">
          <svg width="22" height="20" viewBox="0 0 22 20">
            <path d="M0 1h8l2 2h12v17H0z" fill="#f4b93d" />
            <path d="M0 6h22v14H0z" fill="#fbd767" />
            <path d="M5 12h12v8H5z" fill="#2e8dd2" />
            <path d="M8 14h6v6H8z" fill="#8ecdf2" />
          </svg>
        </div>
      </Slot>
      <Slot className="w-[48px] h-full">
        <svg width="23" height="25" viewBox="0 0 23 25">
          <path d="M7 6V4a4 4 0 018 0v2" fill="none" stroke="#fff" />
          <rect y="5" width="23" height="20" rx="1.500" fill="#fff" />
          <rect x="6" y="10" width="5" height="5" fill="#f25022" />
          <rect x="12" y="10" width="5" height="5" fill="#7fba00" />
          <rect x="6" y="16" width="5" height="5" fill="#00a4ef" />
          <rect x="12" y="16" width="5" height="5" fill="#ffb900" />
        </svg>
      </Slot>
      <Slot className="w-[50px] h-full">
        <svg width="24" height="20" viewBox="0 0 24 20">
          <path d="M0 6L12 0l12 6-12 6z" fill="#fff" />
          <path d="M0 8l12 6 12-6v12H0z" fill="#fff" />
        </svg>
      </Slot>
      <Slot className="w-[49px] h-full">
        <svg width="24" height="25" viewBox="0 0 24 25">
          <circle cx="12" cy="14" r="11" fill="#f0653a" />
          <path d="M14 0c2 3 9 7 9 14 0-4-3-8-6-8 0-2-2-4-3-6z" fill="#ffbd2e" />
          <circle cx="12" cy="14" r="5.500" fill="#7a3cc2" />
          <path d="M3 8c1 3 3 4 6 4-2-3-3-5-6-4z" fill="#ffa436" />
        </svg>
      </Slot>
      <Slot className="w-[49px] h-full">
        <svg width="24" height="24" viewBox="0 0 24 24">
          <circle cx="12" cy="12" r="12" fill="#4caf50" />
          <path d="M12 0a12 12 0 0110.400 6H12a6 6 0 00-5.200 3L3.500 3.500A12 12 0 0112 0z" fill="#e53935" />
          <path d="M22.400 6A12 12 0 0112 24l5.200-9A6 6 0 0017 9z" fill="#fbc02d" />
          <circle cx="12" cy="12" r="5.500" fill="#fff" />
          <circle cx="12" cy="12" r="4.300" fill="#3f7fe8" />
        </svg>
      </Slot>
      <Slot className="w-[49px] h-full">
        <div className="w-[40px] h-full flex items-center justify-center border-b-2 border-[#76b9ed]">
          <svg width="24" height="24" viewBox="0 0 24 24">
            <circle cx="12" cy="12" r="11" fill="none" stroke="#b8141c" strokeWidth="1.500" />
            <circle cx="12" cy="12" r="8.500" fill="#c4161f" />
          </svg>
        </div>
      </Slot>
      <div className="w-[48px] h-full flex items-center justify-center bg-[#4b5e67] border-b-2 border-[#76b9ed]">
        <div className="w-[22px] h-[22px] bg-[#eef2f4] flex items-center justify-center">
          <TableauMark c1="#5b9bc8" c2="#7fb4d6" c3="#7fb4d6" c4="#5b9bc8" />
        </div>
      </div>
      <Slot className="w-[20px] ml-[489px]">
        <svg width="20" height="16" viewBox="0 0 20 16" fill="none" stroke="#fff">
          <path d="M3.500 1.500h13v13h-13zM1 3.500v11h2.500M18.500 3.500v11h-2" />
          <path d="M5.500 4.500h8M5.500 7h4v4h-4zM11 7h3M11 9h3M11 11h3" />
        </svg>
      </Slot>
      <span className="ml-[11px] w-[38px] text-[13px]">33°C</span>
      <span className="text-[13px] w-[60px]">Windy</span>
      <Slot className="w-[20px]">
        <svg width="12" height="7" viewBox="0 0 12 7" fill="none" stroke="#fff"><path d="M.5 6.500L6 1l5.500 5.500" /></svg>
      </Slot>
      <Slot className="w-[25px]">
        <svg width="11" height="16" viewBox="0 0 11 16" fill="none" stroke="#fff">
          <path d="M2 1h7M2 15h7M.5 4h10v8H.5z" strokeWidth=".9" />
          <circle cx="5.500" cy="8" r="2" />
        </svg>
      </Slot>
      <Slot className="w-[24px]">
        <svg width="15" height="10" viewBox="0 0 15 10"><path d="M.5.500h12.500v9H.5z" fill="none" stroke="#fff" /><path d="M2 2h8v6H2z" fill="#fff" /><path d="M14 3h1v4h-1z" fill="#fff" /></svg>
      </Slot>
      <Slot className="w-[23px]">
        <svg width="10" height="18" viewBox="0 0 10 18" fill="#fff">
          <rect x="2" width="6" height="12" rx="3" />
          <path d="M.5 8c0 6 9 6 9 0M5 13v4M2 17.500h6" fill="none" stroke="#fff" />
        </svg>
      </Slot>
      <Slot className="w-[24px]">
        <svg width="16" height="14" viewBox="0 0 16 14" fill="none" stroke="#fff">
          <path d="M.5 4.500h3L7.500 1v12l-4-3.500h-3zM10 4.500c1 1.500 1 3.500 0 5M12.500 2.500c2 2.500 2 6.500 0 9" />
        </svg>
      </Slot>
      <Slot className="w-[25px]">
        <svg width="16" height="16" viewBox="0 0 16 16" fill="none" stroke="#fff">
          <circle cx="8" cy="8" r="7.500" />
          <ellipse cx="8" cy="8" rx="3.500" ry="7.500" />
          <path d="M1 5.500h14M1 10.500h14" />
          <circle cx="13" cy="13" r="2.500" fill="#1c2c3f" />
        </svg>
      </Slot>
      <div className="w-[58px] ml-[2px] flex flex-col items-center text-[11.5px] leading-[19px]">
        <span>7:47 PM</span>
        <span>10/7/2023</span>
      </div>
      <Slot className="w-[40px] ml-[3px]">
        <svg width="15" height="15" viewBox="0 0 15 15" fill="none" stroke="#fff">
          <path d="M.5.500h14v11H9l-1.500 2.500L6 11.500H.5z" />
        </svg>
      </Slot>
    </div>
  );
}

export default function App() {
  return (
    <div className="w-[1366px] h-[768px] overflow-hidden flex flex-col bg-[#f5f5f5] font-['Open_Sans',sans-serif]">
      <TitleBar />
      <MenuBar />
      <Toolbar />
      <div className="flex h-[592px]">
        <FormatPane />
        <MidColumn />
        <RightArea />
      </div>
      <Tabs />
      <StatusBar />
      <Taskbar />
    </div>
  );
}
